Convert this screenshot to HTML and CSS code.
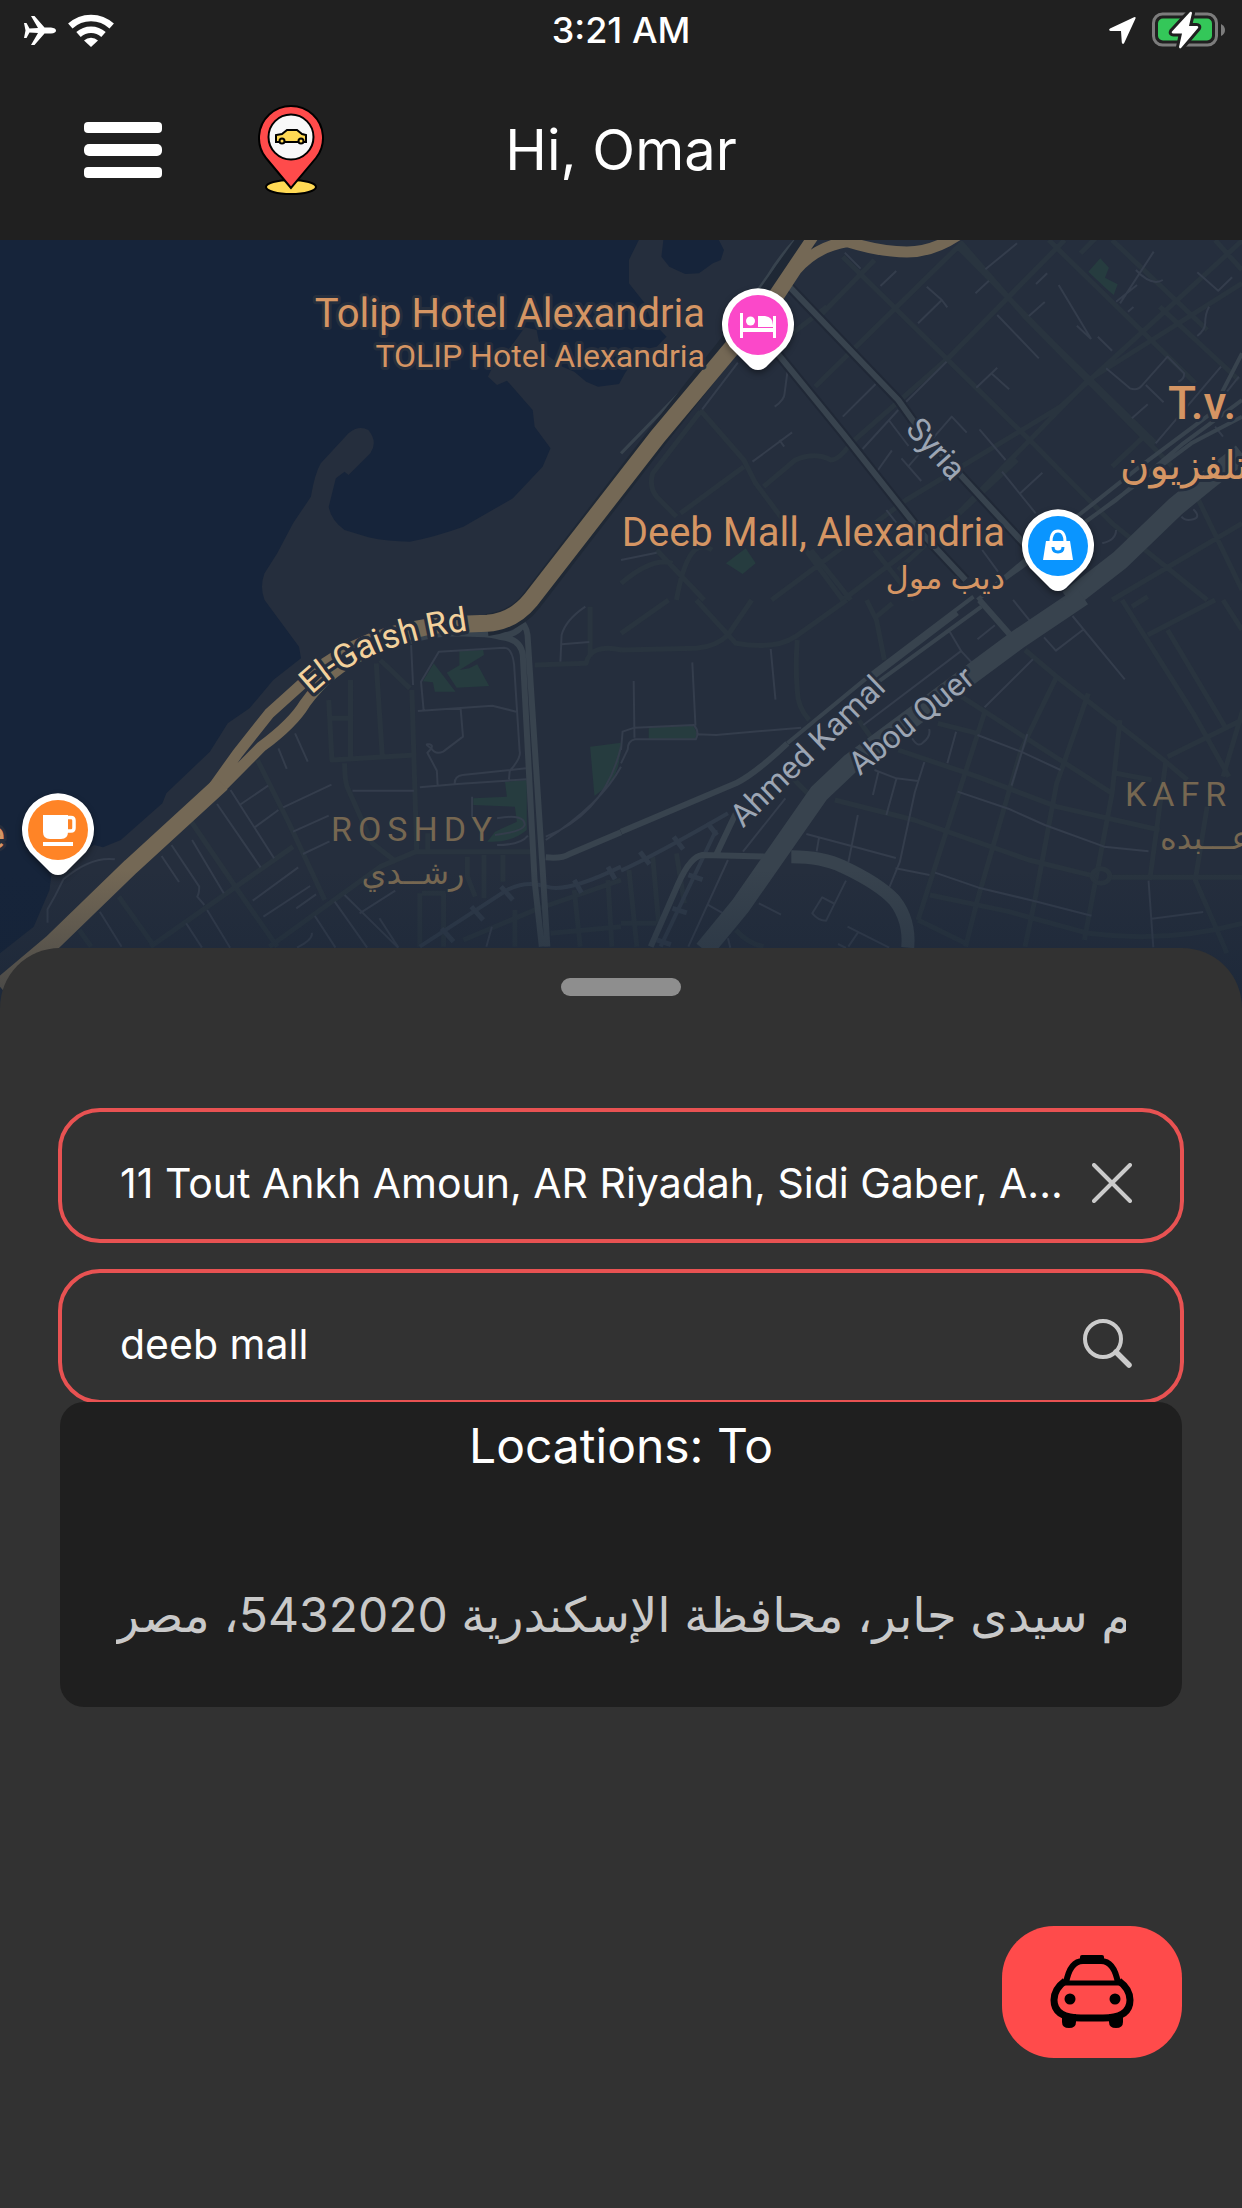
FILE: index.html
```html
<!DOCTYPE html>
<html lang="en">
<head>
<meta charset="utf-8">
<meta name="viewport" content="width=device-width, initial-scale=1">
<title>Ride</title>
<link rel="stylesheet" href="styles.css">
</head>
<body>
<div class="app">
  <header class="top">
    <div class="status">
      <div class="status-side">
        <svg class="plane" viewBox="0 0 32 29" width="32" height="29" aria-hidden="true"><path d="M0 7h2.500l3 5.500 8.500-.5L7 0h3.500l10 11.500H27q5 .5 5 3t-5 3h-6.500l-10 11.500H7l7-12-8.500-.5-3 5.500H0l1.500-7.500z" fill="#fff"/></svg>
        <svg class="wifi" viewBox="0 0 46 33" width="46" height="33" aria-hidden="true"><g fill="none" stroke="#fff" stroke-width="6.500"><path d="M2.300 12A30.500 30.500 0 0 1 43.700 12"/><path d="M10.500 20.500a18.500 18.500 0 0 1 25 0"/></g><path d="M16 26.500a10.500 10.500 0 0 1 14 0L23 33z" fill="#fff"/></svg>
      </div>
      <time class="clock">3:21 AM</time>
      <div class="status-side status-end">
        <svg viewBox="0 0 27 27" width="27" height="27" aria-hidden="true"><path d="M26.500 1.500Q27-.5 25 .3L1 11.500Q-1 13.200 1.500 14H12l.8 11.500q.8 2.500 2.400.5z" fill="#fff"/></svg>
        <svg viewBox="0 0 74 38" width="74" height="38" aria-hidden="true"><rect x="1.500" y="3" width="63" height="31" rx="9" fill="none" stroke="#7c7c7c" stroke-width="3"/><path d="M69 13q4 2 4 6t-4 6z" fill="#7c7c7c"/><rect x="6" y="7.500" width="54" height="22" rx="5" fill="#34c759"/><path d="M38 1L20 20.500q-1 2 1.500 2H30L27 36q.5 2.500 2.500.5L46 17q1-2-1.500-2H37l3-13q-.5-2-2-1z" fill="#fff" stroke="#202020" stroke-width="6" paint-order="stroke"/></svg>
      </div>
    </div>
    <div class="bar">
      <div class="bar-left">
        <button class="plain" type="button" aria-label="Menu">
          <svg viewBox="0 0 78 56" width="78" height="56"><g fill="#fff"><rect width="78" height="11" rx="4"/><rect y="22" width="78" height="12" rx="5"/><rect y="45" width="78" height="11" rx="4"/></g></svg>
        </button>
        <svg viewBox="0 0 66 90" width="66" height="90" role="img" aria-label="Car location">
          <g stroke="#000" stroke-width="2">
            <ellipse cx="33" cy="82" rx="25" ry="7" fill="#ffd954"/>
            <path d="M33 83L8 53a32 32 0 1 1 50 0z" fill="#ff4b4b"/>
            <circle cx="33" cy="32" r="22.500" fill="#f8f8f8"/>
            <path d="M18 37v-7l6-1 5-4h10l5 4 4 1v7z" fill="#ffd954"/>
            <circle cx="24" cy="36" r="2.500" fill="#ffd954"/><circle cx="43" cy="36" r="2.500" fill="#ffd954"/>
          </g>
        </svg>
      </div>
      <h1 class="hello">Hi, Omar</h1>
    </div>
  </header>

  <main class="main">
    <section class="map" aria-label="Map">
      <svg class="map-art" viewBox="0 0 1242 768" preserveAspectRatio="xMidYMin slice">
        <defs>
          <linearGradient id="shade" x1="0" y1="0" x2="0" y2="1"><stop offset="0" stop-color="#152336" stop-opacity="0"/><stop offset="1" stop-color="#152336" stop-opacity=".5"/></linearGradient>
          <path id="gaish" d="M312 455C346 422 396 399 480 389"/>
        </defs>
        <g transform="scale(.39605 .33333)">
          <path class="land" d="M1613 0L1588 60V130L1628 190 1643 240 1683 290 1658 320 1618 330 1578 400 1563 432 1510 440 1480 425 1450 395 1420 380 1365 330 1355 270 1325 262 1290 320 1240 390 1232 410 1255 435 1280 422 1345 510 1350 560 1390 625 1370 680 1295 775 1170 860Q1100 890 1035 905 980 905 930 892L870 870Q835 840 830 800L848 715 870 695 880 705 935 640Q955 605 930 570 905 555 880 580L810 670Q795 700 785 770L740 850 700 940 668 1000Q655 1040 668 1080L755 1220 760 1255 690 1320 630 1405 575 1450 530 1535 420 1660 410 1690 305 1800 260 1822 237 1815 130 1900 125 1950 85 2060 0 2140V2304H3136V0z"/>
          <path class="water" d="M1675 0L1670 50 1690 80 1730 102 1765 100 1800 70 1820 60 1828 30 1815 0z"/>
          <g transform="translate(1568 0)">
            <path class="park" d="M1210 55l22 28-10 30 32 20-10 32-20-20-44-50zM315 925l25 45-33 32-42-32zM330 925l6-4-2 8z"/>
            <path class="street wide" d="M200 510l110 150 30 70 120 190 100 160M200 515L80 700q-10 40 10 70l50 60M150 820L310 680M360 740l80-80q50-25 90 0 20 0 50-50L830 350 1120 0M500 230L640 60M400 310L520 200M490 440L860 10l160 220L1400 690M560 50l480 560L1240 850 1480 1080M850 20l250 300 250 290M1080 0l370 430M1240 0l240 270M1160 40l50-60M1570 0L1110 500 720 780 380 1080M1568 130L1180 420 860 810 560 1080M1360 200l200 220M1500 0l68 90M1240 680l80-90M140 1080q30-200 90-150M0 1030q80-80 130-60M90 930l120 150M480 930l100 150M640 930l100 150M700 990l300-330M1450 760l118 290M1240 1080l328-230"/>
            <path class="street thin" d="M565 38l40 48M655 138l40-45M750 250l60-70-38-40M810 180l14 22M895 160l34-38M920 88L1000 10M1030 228l40-42M1048 132l28-32M1105 135l82 162M1187 297l-36-40M950 225l105 130M1204 290l36 42M1250 185l53-50M1260 190L1345 35M1300 90q40 50 68 30M1455 97l53 55 35-40M1280 215l14-14M1485 200q-10 20-10 50 0 20-20 38M720 485l102-120M560 530l83-98M388 500q25-20 25-40l8-72M205 508l90-140M897 443l53-60M935 400l45 48M1225 385l60 60q20 8 30-8l65-87 42 50q0 20-15 25M1325 435l45 52M1350 610L1515 380M1290 535l40-42M610 627L700 510M678 543l48 75M332 665l100-88M400 600l12 20M640 705l44-74M708 655l50 68M725 680l110-150 38 48M905 568l66 92M962 695l85 125M1008 760l56-62M670 810l25 38M0 960l90-22M1215 910q35-10 35-40M912 930l40 65M1500 560l20 30M1500 500l60-90M1415 830q10 15 30 8t0-30"/>
            <path class="road edge" d="M425 140L700 480 760 580 1040 940M395 340L560 580 640 700 760 880 870 1020"/>
            <path class="road m" d="M425 140L700 480 760 580 1040 940"/>
            <path class="road m" d="M395 340L560 580 640 700 760 880 870 1020"/>
            <path class="road s" d="M1568 340L1490 520 1310 680 1140 840 900 1080M1568 530L1440 610 1180 840 1150 860M1568 480L1420 610 1250 780 930 1050"/>
            <path class="road xl" d="M1568 640Q1480 720 1400 800L1260 960 1130 1080"/>
            <path class="coast" d="M440 0Q400 50 370 110L250 310M270 310L0 640"/>
          </g>
          <g transform="translate(0 1080)">
            <path class="park" d="M1095 190l55 85h-52l-5-28-25-3zM1160 152l60-2 2 15-62 45 25-5 20-12 30 65-82 5-25-45 32-22zM1195 595l85-5-5-45 55-5v150q-40 40-100 35l20-30 55-30-5-45-105-5zM1490 440l78-12q0 70-25 120l-42 40z"/>
            <path class="street wide" d="M830 300l8 180 210-15M885 240v230M950 190l15 275M1040 270l12 480M960 180l75 85M835 355h50M650 480l80 190 90 230M480 660l120 210 100 170M200 990l30 50M300 890l90 150M380 1040L740 740M680 1040L960 800 1050 755h290M870 490q0 60 10 80l60 160 60 55M1080 700v60M1350 195l130-5q10-60 90-40M1490 20v150M1060 880v160M1120 880v160M1065 880h60M1180 770v60l20 60M1222 765v130M1270 765v80M1170 1020l180-90 218-90M1450 870l15 170M1535 840l10 200M1390 1000l178-20M1300 930v110"/>
            <path class="street thin" d="M1038 135l5 120M1070 335l-7-90 45-90 165-12q20 0 25 50l14 260q5 20-25 60l-2 25M1055 333l188-16 60 18M1163 325l6 85-50 45q-20 10-30-10-20-15-5-12t-5 25l24 54 2 45M890 572h155M1060 562l95-10 175-14M1148 550q0-22 20-25l160-20M1415 185l3-80q10-45 60-85M1418 133l70-7M745 400l32 85M703 445l21 62M582 570l110 205M605 615l72-58M643 682l60-52M548 612l110 190M485 720l80 160M740 695l90-48M765 762l67-38M715 622l122-68M408 768l44 78M433 735l70 125q0 20-5 30l18 25M638 902l115-100M665 950l118-92M748 925l50-42M845 905l82 138M870 885l135 158M908 940l90-68M795 948l52 95M958 955l48 88M787 998q5 20-37 45M252 935l55 105M470 970l40 73M523 930l58 113M1228 1040l14-60M290 778q-60-10-130 60-20 50-40 90v40M1192 590v60M1255 655q70-15 70 20-5 20-75 30M1255 735q60 0 78-28M1568 500q-50 110-190 220M1568 440q-40 200-190 270"/>
            <path class="rail" d="M1060 1040L1280 870Q1330 840 1380 860T1568 800"/>
            <path class="rail tie" d="M1265 860l30 40M1190 920l30 40M1115 985l30 40M1450 840l18 38M1535 800l18 38"/>
            <path class="road m" d="M1150 100q80 0 110 10 55 5 60 55l30 680 18 195M1300 45q30 30 32 60l38 700 12 235M1280 105q40-10 40-45M1030 125q60-25 120-25l130 5"/>
            <path class="road m" d="M1378 772q40 5 60-10l130-65"/>
          </g>
          <g transform="translate(1568 1080)">
            <path class="park" d="M70 380l110-5q16 20 8 42H70z"/>
            <path class="street wide" d="M0 150l190-5q50-5 80-40L330 0M0 100L120 0M190 0l100 130q100 20 150-20L570 0M445 120q-5 80 0 150 0 50 30 90M620 0l25 60 20 120M645 50l40-40M1020 150l80 80 270 250 60 60M1100 230L1010 450 900 900 870 1040M1180 280l-80 270-55 350-25 140M1260 360l-20 220-70 440M920 330L820 700 750 960M600 360l30 50M860 290l380 290M800 370l100 30M700 450l200 80 200 90 260 70M540 600l200 60 290 120 170 50M780 885l200 50 200 65q200 30 388-30M750 960l120 70M1265 0l180 340 90 190M1380 90l150 300M1290 20l40-30M1330 105L1500 0M1520 0l48 90M1380 470l188-110M1375 490l-40 350M1480 620l-30 220 80 220M1230 832h338M1250 520l90 20M430 530l50 60M20 810l20 230M80 770l15 200M140 760l20 150M0 970h90M290 990q30 40 70 50M1570 330l-50 200"/>
            <circle class="street wide" cx="1212" cy="828" r="22"/>
            <path class="street thin" d="M32 243l2 170M180 187l8 190M378 147l12 152M0 450l4-55 30-12 150-8q15 20 5 43L35 418q-18 5-18 30L0 490M190 403l50 2 215-22M830 95l30 60 30 38M860 152L612 375M900 118l44-42M990 0l42 62M1068 112l30 40 68-62M1140 48l132 190M1040 178L918 322M846 395l-22 95M1026 402l-40 155M900 405l110 50 100 55M766 486l-24 90-38 210-26 75M640 510l55 25 55 8M650 515l-14 70M696 533L670 645M850 575l130 52 90 48 150 65 112 14M598 645l-24 142M468 702l114 36 112 36M500 712l-6 42M693 805l86 20M793 818l110 45 140 40 145 44M1332 842l12 200M1340 956l130-20M568 842l-50 120q-20 0-35-22l25-48 32 20M572 980l105 63M598 998l-24 42M548 1032l20 12M735 415q15 30 28 12 20-18 15-40M415 595L308 755M270 780L170 1040M220 915l38 25M348 910l56 34M270 1015l6 28"/>
            <path class="rail" d="M0 812Q80 770 270 640M240 690L100 1040"/>
            <path class="rail tie" d="M48 755l24 38M133 710l24 38M218 668l24 38M170 825l36 14M130 925l36 14M90 1020l36 14"/>
            <path class="road m" d="M0 695L290 550Q340 520 420 430M290 640l-50 125M75 1040l70-190q30-80 60-85l170 5M905 0l85 115"/>
            <path class="road s" d="M420 430L640 215 890-10M650 245L910 20M640 230L850 40"/>
            <path class="road l" d="M430 770q80 0 130 30 90 50 130 100 40 60 34 143"/>
            <path class="road xl" d="M1165-12L1000 120 580 490 500 580 300 920 210 1050"/>
          </g>
          <path class="road high-shadow" d="M2040 0L1945 160 1660 590 1340 1085Q1300 1145 1230 1155"/>
          <path class="road high" d="M1968 170L1900 250 1660 590 1340 1080Q1295 1145 1230 1150L1180 1152"/>
          <path class="road high mid" d="M2430-24Q2360 36 2290 36 2225 36 2140 5 2060 20 2010 90L1955 190M2055-14L1945 180M1180 1158Q1050 1156 930 1235 830 1290 770 1390 740 1450 660 1520L560 1640M1180 1142Q960 1150 820 1270L680 1420 600 1540 540 1640"/>
          <path class="road high" d="M560 1630L330 1880 130 2110 0 2240"/>
        </g>
        <rect y="630" width="1242" height="138" fill="url(#shade)"/>

        <g class="poi">
          <text class="t40" x="705" y="87" text-anchor="end">Tolip Hotel Alexandria</text>
          <text class="t32" x="705" y="127" text-anchor="end">TOLIP Hotel Alexandria</text>
          <text class="t40" x="1005" y="306" text-anchor="end">Deeb Mall, Alexandria</text>
          <text class="t32" x="1005" y="349" text-anchor="end">ديب مول</text>
          <text class="t46" x="1168" y="179">T.v.</text>
          <text class="t40" x="1120" y="239">تلفزيون</text>
          <text class="t40" x="5" y="609" text-anchor="end">Cafe</text>
        </g>
        <g class="area">
          <text class="t34 spaced" x="331" y="601">ROSHDY</text>
          <text class="t32" x="413" y="644" text-anchor="middle">رشــدي</text>
          <text class="t34 spaced" x="1125" y="566">KAFR ABDO</text>
          <text class="t32" x="1160" y="609">كفر عـــبده</text>
        </g>
        <g class="way">
          <text class="t32" transform="translate(928 216) rotate(48)" text-anchor="middle">Syria</text>
          <text class="t32" transform="translate(815 519) rotate(-44)" text-anchor="middle">Ahmed Kamal</text>
          <text class="t32" transform="translate(918 489) rotate(-39)" text-anchor="middle">Abou Quer</text>
        </g>
        <text class="highway t34"><textPath href="#gaish">El-Gaish Rd</textPath></text>

        <g class="pin" transform="translate(758 85)"><path d="M0 45q-6 0-10-5L-28 22a36 36 0 1 1 56 0L10 40Q6 45 0 45z"/><circle r="30" fill="#fb48c9"/><g fill="#fff"><path d="M-18-12h3v15h30v-12h3v22h-3V7h-30v6h-3z"/><circle cx="-7.500" cy="-4" r="4.500"/><path d="M0-9h7q8 1 8 9v2H0z"/></g></g>
        <g class="pin" transform="translate(1058 306)"><path d="M0 45q-6 0-10-5L-28 22a36 36 0 1 1 56 0L10 40Q6 45 0 45z"/><circle r="30" fill="#0a95ff"/><path d="M-12-5h24l3 19h-30z" fill="#fff"/><path d="M-7-4q0-11 7-11t7 11" fill="none" stroke="#fff" stroke-width="3"/><path d="M-5 1q0 5 5 5t5-5" fill="none" stroke="#0a95ff" stroke-width="3"/></g>
        <g class="pin" transform="translate(58 590)"><path d="M0 45q-6 0-10-5L-28 22a36 36 0 1 1 56 0L10 40Q6 45 0 45z"/><circle r="30" fill="#ff8426"/><path d="M-15-15H10V2q0 7-7 7H-8q-7 0-7-7zM-15 12h30v4h-30z" fill="#fff"/><path d="M9-12.500h4q3 0 3 3V-2q0 3-3 3H9" fill="none" stroke="#fff" stroke-width="3.500"/></g>
      </svg>
    </section>

    <section class="sheet" aria-label="Plan a ride">
      <div class="handle"></div>
      <form class="search">
        <div class="field">
          <input class="input" type="text" aria-label="From" value="11 Tout Ankh Amoun, AR Riyadah, Sidi Gaber, A...">
          <button class="plain" type="button" aria-label="Clear"><svg viewBox="0 0 40 40" width="40" height="40"><path d="M2 2l36 36M38 2L2 38" fill="none" stroke="#cbcbcb" stroke-width="4" stroke-linecap="round"/></svg></button>
        </div>
        <div class="field">
          <input class="input" type="text" aria-label="To" value="deeb mall">
          <button class="plain" type="button" aria-label="Search"><svg viewBox="0 0 49 49" width="49" height="49"><g fill="none" stroke="#cbcbcb"><circle cx="20" cy="20" r="18" stroke-width="4"/><path d="M33 33l13 13" stroke-width="5.500" stroke-linecap="round"/></g></svg></button>
        </div>
      </form>
      <div class="results">
        <h2 class="results-title">Locations: To</h2>
        <a class="result" href="#" dir="rtl" lang="ar"><span class="result-text">قسم سيدى جابر، محافظة الإسكندرية 5432020، مصر</span></a>
      </div>
      <button class="ride" type="button" aria-label="Request a ride">
        <svg viewBox="0 0 84 76" width="84" height="76"><g fill="none" stroke="#000"><path d="M16 29Q20 7 33 7h18q13 0 17 22" stroke-width="6"/><path d="M14 29h56" stroke-width="5"/><path d="M15 27Q4 35 4 46q0 18 27 18h22q27 0 27-18 0-11-11-19" stroke-width="7"/></g><rect x="30" y="1" width="24" height="9" rx="2"/><circle cx="20" cy="45" r="5.500"/><circle cx="65" cy="45" r="5.500"/><path d="M12 60h14v8q0 6-7 6t-7-6zM59 60h14v8q0 6-7 6t-7-6z"/></svg>
      </button>
    </section>
  </main>
</div>
</body>
</html>
```
FILE: styles.css
```css
* { box-sizing: border-box; }

body {
  margin: 0;
  background: #323232;
  color: #fff;
  font-family: Inter, "DejaVu Sans", sans-serif;
}

.app {
  display: flex;
  flex-direction: column;
  min-height: 100vh;
}

.plain {
  display: block;
  padding: 0;
  border: 0;
  background: none;
  flex: none;
}

svg { display: block; flex: none; }

/* Header */
.top { background: #202020; }

.status {
  display: grid;
  grid-template-columns: 1fr auto 1fr;
  align-items: center;
  height: 60px;
  padding: 0 16px;
}

.status-side { display: flex; align-items: center; gap: 12px; padding-left: 8px; }
.status-end { justify-content: flex-end; gap: 16px; }

.clock { font-size: 36px; font-weight: 500; }

.bar {
  display: grid;
  grid-template-columns: 1fr auto 1fr;
  align-items: center;
  height: 180px;
  padding: 0 84px;
}

.bar-left { display: flex; align-items: center; gap: 96px; }

.hello { margin: 0; font-size: 56px; font-weight: 400; }

/* Map */
.main { display: flex; flex-direction: column; flex: 1; }

.map { height: 768px; background: #16243a; overflow: hidden; }
.map-art { width: 100%; height: 100%; }

.land { fill: #252e3d; }
.water { fill: #16243a; }
.park { fill: #263c3f; }

.street, .road, .coast, .rail { fill: none; vector-effect: non-scaling-stroke; stroke-linejoin: round; }
.street.wide { stroke: #29343f; stroke-width: 5px; }
.street.thin { stroke: #343d4c; stroke-width: 2px; }
.rail { stroke: #2f3a49; stroke-width: 4px; }
.rail.tie { stroke-width: 5px; }
.coast { stroke: #38434e; stroke-width: 3px; }
.road { stroke: #38434e; }
.road.s { stroke-width: 4px; }
.road.m { stroke-width: 6px; }
.road.edge { stroke: #202836; stroke-width: 10px; }
.road.l { stroke-width: 13px; }
.road.xl { stroke-width: 20px; }
.road.high { stroke: #746855; stroke-width: 17px; }
.road.high.mid { stroke-width: 11px; }
.road.high-shadow { stroke: #1f2835; stroke-width: 22px; }

.map text { font-family: Roboto, "DejaVu Sans", sans-serif; paint-order: stroke; stroke-linejoin: round; }
.poi { fill: #d59563; stroke: #252e3d; stroke-width: 6px; }
.area { fill: #766751; }
.way { fill: #9ca5b3; stroke: #252e3d; stroke-width: 6px; }
.highway { fill: #f3d19c; stroke: #252e3d; stroke-width: 7px; }
.t32 { font-size: 32px; }
.t34 { font-size: 34px; }
.t40 { font-size: 40px; }
.t46 { font-size: 46px; font-weight: 500; }
.spaced { letter-spacing: 6px; }
.pin { fill: #fff; stroke: none; filter: drop-shadow(0 3px 3px rgb(0 0 0 / .4)); }

/* Bottom sheet */
.sheet {
  display: flex;
  flex-direction: column;
  flex: 1;
  position: relative;
  margin-top: -60px;
  padding: 30px 60px 150px;
  border-radius: 60px 60px 0 0;
  background: #323232;
}

.handle {
  align-self: center;
  width: 120px;
  height: 18px;
  border-radius: 9px;
  background: #8e8e8e;
}

.search {
  display: flex;
  flex-direction: column;
  gap: 26px;
  margin: 112px -2px 0;
}

.field {
  display: flex;
  align-items: center;
  gap: 16px;
  height: 135px;
  padding: 14px 48px 0 58px;
  border: 4px solid #e85252;
  border-radius: 42px;
}

.input {
  flex: 1;
  min-width: 0;
  padding: 0;
  border: 0;
  outline: 0;
  background: none;
  color: #fff;
  font-family: inherit;
  font-size: 41px;
  text-overflow: ellipsis;
}

.results {
  margin-top: -2px;
  padding: 14px 56px 56px;
  border-radius: 24px;
  background: #1f1f1f;
  position: relative;
}

.results-title {
  margin: 0;
  font-size: 48px;
  line-height: 60px;
  font-weight: 400;
  text-align: center;
}

.result {
  display: flex;
  justify-content: flex-end;
  margin-top: 103px;
  overflow: hidden;
  color: #c9c9c9;
  font-size: 48px;
  line-height: 72px;
  text-decoration: none;
  white-space: nowrap;
}

.ride {
  display: flex;
  align-items: center;
  justify-content: center;
  align-self: flex-end;
  width: 180px;
  height: 132px;
  margin-top: auto;
  border: 0;
  border-radius: 52px;
  background: #ff4b4b;
}
```
